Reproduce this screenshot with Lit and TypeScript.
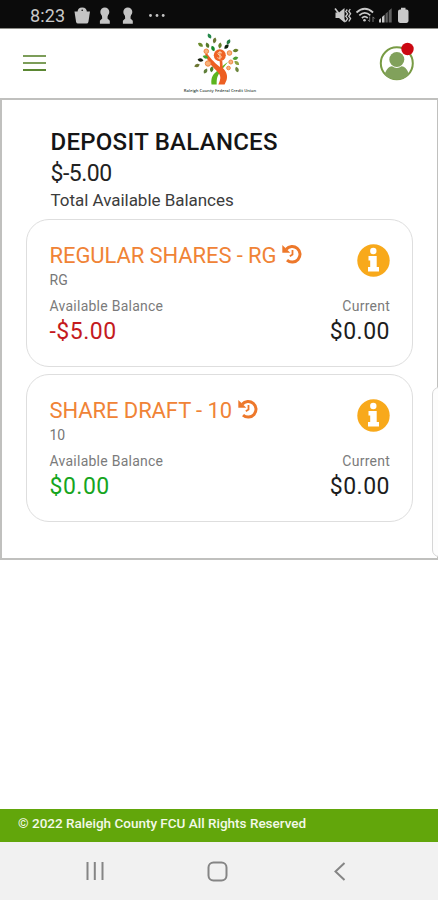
import { LitElement, html, css, svg } from "lit";
import { customElement, property } from "lit/decorators.js";

@customElement("status-bar")
class StatusBar extends LitElement {
  static styles = css`
    :host { display: flex; height: 29px; background: #0b0b0b; border-bottom: 1px solid #8d8d88; box-sizing: border-box; padding-left: 30px; }
    .time { font: 400 18px/32px Roboto, sans-serif; color: #c9c9c9; width: 44px; letter-spacing: .1px; }
    svg { display: block; flex: none; }
  `;
  render() {
    return html`
      <div class="time">8:23</div>
      <svg width="94" height="28" viewBox="74 0 94 28" fill="#c4c4c4">
        <path d="M74.500 11.500h15.500l-1.600 10.400q-.3 1.600-1.900 1.600h-8.500q-1.600 0-1.900-1.600z"/>
        <path d="M77.500 12.500q0-5 4.700-5t4.700 5z"/>
        <circle cx="82.200" cy="10.300" r=".8" fill="#0b0b0b"/>
        <circle cx="104.800" cy="12" r="4.500"/><path d="M101.800 14h6l-.3 4.500 2.300 2.200v3h-9.900v-3l2.300-2.200z"/>
        <circle cx="127.800" cy="12" r="4.500"/><path d="M124.800 14h6l-.3 4.500 2.300 2.200v3h-9.900v-3l2.300-2.200z"/>
        <circle cx="150.500" cy="15.500" r="1.400"/><circle cx="157" cy="15.500" r="1.400"/><circle cx="163.200" cy="15.500" r="1.400"/>
      </svg>
      <svg width="270" height="28" viewBox="168 0 270 28" fill="#c9c9c9">
        <path d="M335.500 12.500h3.500l5.500-4.500v14.500l-5.500-4.500h-3.500z"/>
        <path d="M335 8.500l10.500 13.500" stroke="#c9c9c9" stroke-width="1.600"/>
        <path d="M347.300 9.500l-1.500 2 1.800 2.400-1.800 2.400 1.800 2.400-1.800 2.800M350.300 9l-1.500 2.200 1.800 2.600-1.800 2.400 1.800 2.400-1.800 2.900" fill="none" stroke="#c9c9c9" stroke-width="1.300"/>
        <g fill="none" stroke="#c9c9c9" stroke-width="1.700"><path d="M356.500 12.500q8.300-7.500 16.600 0"/><path d="M359.300 15.300q5.500-5 11 0"/><path d="M361.900 18q2.900-2.600 5.800 0"/></g>
        <circle cx="364.500" cy="20.300" r="1.300"/>
        <path d="M369.700 16.500v5M368 20l1.700 1.800M373 22v-5M374.600 18.500l-1.600-1.700" fill="none" stroke="#777"/>
        <path d="M379 22.500v-2.700l2-1.800v4.500zM382 22.500v-5.500l2.500-2.200v7.700z"/><path d="M385.500 22.500v-8.800l2.300-2v10.800zM388.700 22.500v-11.700l3-2.500v14.200z" fill="#606060"/>
        <path d="M401 7.800h4.500v1.800h1q2 0 2 2v9.500q0 1.800-2 1.800h-6.500q-2 0-2-1.800v-9.500q0-2 2-2h1z"/>
      </svg>`;
  }
}

const leaves: [number, number, number, string][] = [
  [209.5, 36, 60, "#26894b"], [214.6, 40.5, 105, "#697633"], [200.5, 44.7, 35, "#6b8c2c"], [207.5, 45.3, 70, "#56792b"],
  [213, 48.5, 65, "#168a29"], [228.5, 41.8, -60, "#257c42"], [226.5, 46.7, -45, "#10240e"], [220, 45.5, 100, "#668229"],
  [235.6, 50.5, -10, "#667e2b"], [200.5, 60, 10, "#16200f"], [197, 65.5, -20, "#6d7834"],
  [205.5, 57, 20, "#43a72d"], [211.7, 69.3, 100, "#4a812b"], [205.5, 71, -60, "#61803c"], [235.4, 58.3, -15, "#4d9d32"],
  [236.8, 63, 40, "#8da443"], [237, 69.5, 70, "#6c863d"],
];

@customElement("app-header")
class AppHeader extends LitElement {
  static styles = css`
    :host { display: grid; grid-template-columns: 1fr 90px 1fr; height: 69px; background: #fff; }
    .left { padding: 26px 0 0 23px; }
    .bars { width: 23px; height: 16px; display: flex; flex-direction: column; justify-content: space-between; }
    .bars i { height: 2px; background: #7c9d59; }
    .bars i:last-child { background: #5b8733; }
    .right { display: flex; justify-content: flex-end; padding: 11px 22px 0 0; }
    .logo { display: flex; flex-direction: column; align-items: center; }
    .name { font: 600 4.150px/5px "Open Sans", sans-serif; color: #33443a; white-space: nowrap; margin-top: 1.500px; margin-left: 2px; }
    svg { display: block; }
  `;
  render() {
    return html`
      <div class="left"><div class="bars"><i></i><i></i><i></i></div></div>
      <div class="logo">
        <svg width="90" height="57" viewBox="174 29 90 57">
          <path d="M211.500 84.500c-.8-7 1.500-10 5-13 3-3 5-5 11.500-9.500-4 5-6 7.500-8.500 11-2 3-3 5-2.800 11.500z" fill="#5cb51e"/>
          <path d="M207 53.500c3 4 6 8 13 13.500l-.3-6 2.600 0 .5 7c4 4 5 8 3.800 12l-2 4.500h-6.300c3-6 2.700-9-1-13-5-4.500-9-9.500-12.300-17z" fill="#ed5f22"/>
          ${leaves.map(([x, y, a, c]) => svg`<path d="M-3 0Q0-3.500 3 0Q0 3.500-3 0z" transform="translate(${x} ${y}) rotate(${a})" fill=${c} />`)}
          <circle cx="219.800" cy="55.300" r="6" fill="#ef6325"/>
          <path d="M222 53.100q-2-1.600-3.700-.5-1.300 1.400.8 2.500l1.600.7q1.500 1.400-.3 2.300-1.800.6-3-.5M219.900 51v8.500" stroke="#fbd0a8" stroke-width="1" fill="none"/>
          <g fill="#f8b27c" stroke="#ef8743" stroke-width="1"><circle cx="206.300" cy="51.300" r="2.300"/><circle cx="208" cy="63.500" r="2.700"/><circle cx="229.500" cy="53" r="2.300"/><circle cx="230.800" cy="62" r="2"/><circle cx="228.500" cy="68" r="1.800"/></g>
        </svg>
        <div class="name">Raleigh County Federal Credit Union</div>
      </div>
      <div class="right">
        <svg width="37" height="42" viewBox="379 40 37 42">
          <clipPath id="disc"><circle cx="396.800" cy="63.300" r="16.500"/></clipPath>
          <circle cx="396.800" cy="63.300" r="16" fill="#fff" stroke="#789b44" stroke-width="2"/>
          <circle cx="396.800" cy="59.500" r="7.500" fill="#81a15b"/>
          <path clip-path="url(#disc)" d="M385 73q3-7 7-6.800 4.800 3.500 9.600 0 4-.2 7 6.800v8h-24z" fill="#81a15b"/>
          <circle cx="407.500" cy="49" r="6.200" fill="#cb0711"/>
        </svg>
      </div>`;
  }
}

@customElement("account-card")
class AccountCard extends LitElement {
  @property() name = "";
  @property() code = "";
  @property() available = "";
  @property({ type: Boolean }) negative = false;
  static styles = css`
    :host { display: block; box-sizing: border-box; height: 148px; border: 1px solid #dedede; border-radius: 23px; padding: 20px 22px 0 22.500px; font-family: Roboto, sans-serif; background: #fff; }
    .row { display: flex; justify-content: space-between; }
    .title { display: flex; font-size: 22px; line-height: 31px; color: #f08336; white-space: nowrap; gap: 6px; letter-spacing: -.09px; }
    .history { margin-top: 4px; }
    .info { margin-top: 4px; margin-bottom: -6px; }
    .code { font-size: 14px; line-height: 19px; color: #777; height: 19px; }
    .label { font-size: 14px; line-height: 32px; color: #7b7b7b; letter-spacing: .25px; }
    .amount { font-size: 23px; line-height: 20px; color: #1d1d1d; letter-spacing: .5px; }
    .pos { color: #16a51e; }
    .neg { color: #c41a20; }
    .head { height: 31px; }
    svg { display: block; flex: none; }
  `;
  render() {
    return html`
      <div class="row head">
        <div class="title"><span>${this.name}</span>
          <svg class="history" width="20" height="20" viewBox="0 0 20 20" fill="none" stroke="#ed782b">
            <path d="M4.200 5.300A7.800 7.800 0 1 1 5 16.100" stroke-width="3"/>
            <path d="M.3 1v7.800H8.300z" fill="#ed782b" stroke="none"/>
            <path d="M10.500 6v4.500l-2.700 1.800" stroke-width="1.800"/>
          </svg>
        </div>
        <svg class="info" width="33" height="33" viewBox="0 0 33 33">
          <circle cx="16.500" cy="16.500" r="16.200" fill="#f8a91b"/>
          <circle cx="16.300" cy="7" r="3.200" fill="#fff"/>
          <path d="M11.500 12h8.200v11h2.300v4.500H11V23h2.200v-6.500h-1.700z" fill="#fff"/>
        </svg>
      </div>
      <div class="code">${this.code}</div>
      <div class="row"><span class="label">Available Balance</span><span class="label">Current</span></div>
      <div class="row"><span class="amount ${this.negative ? "neg" : "pos"}">${this.available}</span><span class="amount">$0.00</span></div>`;
  }
}

@customElement("app-root")
class AppRoot extends LitElement {
  static styles = css`
    :host { display: flex; flex-direction: column; width: 438px; height: 900px; background: #fff; font-family: Roboto, sans-serif; overflow: hidden; position: relative; }
    status-bar, app-header { flex: none; }
    main { height: 462px; box-sizing: border-box; border: 2px solid #c0c0be; border-right-width: 1px; padding: 25.500px 24px 0 24px; }
    .summary { padding-left: 24.500px; height: 93.500px; color: #222; white-space: nowrap; }
    h1 { margin: 0; font-size: 24px; line-height: 32px; font-weight: 500; color: #151515; letter-spacing: .26px; }
    .total { font-size: 23px; line-height: 31px; letter-spacing: -.5px; }
    .caption { font-size: 17px; line-height: 23px; color: #3c3c3c; letter-spacing: -.03px; }
    .cards { display: grid; gap: 6.500px; }
    .edge { position: absolute; right: -8px; top: 387px; width: 14px; height: 170px; box-sizing: border-box; border: 1px solid #d6d6d6; border-radius: 7px; background: #fdfdfd; }
    footer { margin-top: auto; height: 33px; background: #62a60b; color: #f3f9e8; font-size: 13.500px; font-weight: 500; line-height: 29px; padding-left: 18px; white-space: nowrap; }
    nav { height: 58px; background: #f1f1f1; }
    nav svg { display: block; }
  `;
  render() {
    return html`
      <status-bar></status-bar>
      <app-header></app-header>
      <main>
        <div class="summary">
          <h1>DEPOSIT BALANCES</h1>
          <div class="total">$-5.00</div>
          <div class="caption">Total Available Balances</div>
        </div>
        <div class="cards">
          <account-card name="REGULAR SHARES - RG" code="RG" available="-$5.00" negative></account-card>
          <account-card name="SHARE DRAFT - 10" code="10" available="$0.00"></account-card>
        </div>
      </main>
      <div class="edge"></div>
      <footer>© 2022 Raleigh County FCU All Rights Reserved</footer>
      <nav>
        <svg width="438" height="58" viewBox="0 842 438 58" fill="none" stroke="#858585" stroke-width="2">
          <path d="M87.500 862v18M94.800 862v18M102.500 862v18"/>
          <rect x="208.500" y="862.500" width="18" height="18" rx="5"/>
          <path d="M344.500 863l-9 8.500 9 8.500"/>
        </svg>
      </nav>`;
  }
}
